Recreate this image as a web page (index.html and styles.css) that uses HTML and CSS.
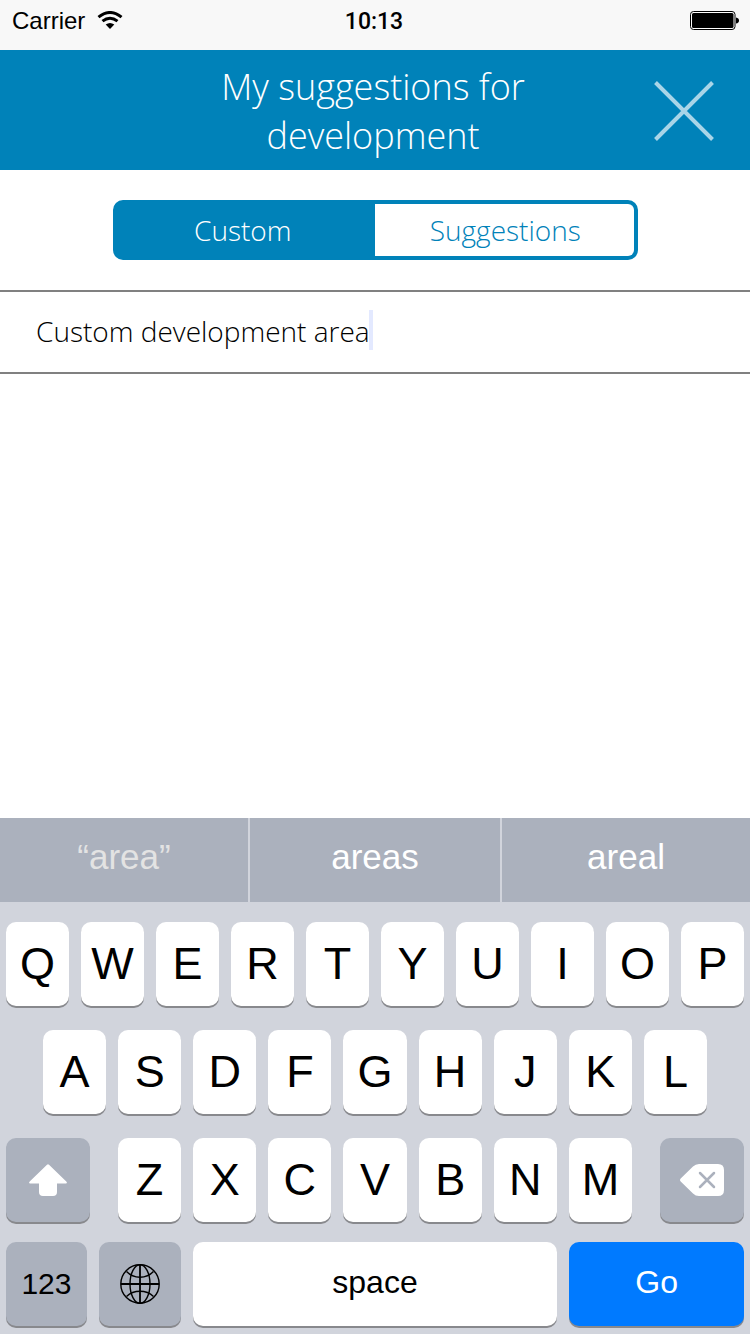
FILE: index.html
```html
<!DOCTYPE html>
<html lang="en">
<head>
<meta charset="utf-8">
<meta name="viewport" content="width=device-width, initial-scale=1">
<title>My suggestions for development</title>
<link rel="stylesheet" href="styles.css">
</head>
<body>
<div class="status">
  <div class="status-left">
    <span>Carrier</span>
    <svg class="wifi" viewBox="0 0 26 20" aria-hidden="true">
      <g fill="none" stroke="#000" stroke-width="3">
        <path d="M1.500 6.200Q13-3.200 24.500 6.200"/>
        <path d="M5.500 10.200Q13 4.200 20.500 10.200"/>
      </g>
      <path d="M8.700 13.600Q13 10.200 17.300 13.600L13 18z"/>
    </svg>
  </div>
  <time class="clock">10:13</time>
  <svg class="battery" viewBox="0 0 50 20" aria-hidden="true">
    <rect x="0.500" y="0.500" width="44.500" height="18" rx="3" fill="#fff" stroke="#000"/>
    <rect x="2" y="2" width="41.500" height="15" rx="1.500"/>
    <path d="M46 6.500q3 .5 3 3t-3 3z"/>
  </svg>
</div>

<header class="header">
  <h1 class="title">My suggestions for development</h1>
  <button class="close" type="button" aria-label="Close">
    <svg class="close-icon" viewBox="0 0 60 60" aria-hidden="true"><path d="M1.500 1.500L58.500 58.500M58.500 1.500L1.500 58.500" stroke="#a9d5e8" stroke-width="4"/></svg>
  </button>
</header>

<main class="content">
  <div class="segments" role="group" aria-label="Source">
    <button class="segment segment-active" type="button" aria-pressed="true">Custom</button>
    <button class="segment" type="button" aria-pressed="false">Suggestions</button>
  </div>
  <div class="field">
    <input class="field-input" type="text" value="Custom development area" aria-label="Development area">
    <span class="caret"></span>
  </div>
</main>

<section class="keyboard" aria-label="Keyboard">
  <div class="predictions">
    <button class="prediction prediction-typed" type="button">“area”</button>
    <button class="prediction" type="button">areas</button>
    <button class="prediction" type="button">areal</button>
  </div>
  <div class="keys">
    <div class="row">
      <button class="key" type="button">Q</button>
      <button class="key" type="button">W</button>
      <button class="key" type="button">E</button>
      <button class="key" type="button">R</button>
      <button class="key" type="button">T</button>
      <button class="key" type="button">Y</button>
      <button class="key" type="button">U</button>
      <button class="key" type="button">I</button>
      <button class="key" type="button">O</button>
      <button class="key" type="button">P</button>
    </div>
    <div class="row row-home">
      <button class="key" type="button">A</button>
      <button class="key" type="button">S</button>
      <button class="key" type="button">D</button>
      <button class="key" type="button">F</button>
      <button class="key" type="button">G</button>
      <button class="key" type="button">H</button>
      <button class="key" type="button">J</button>
      <button class="key" type="button">K</button>
      <button class="key" type="button">L</button>
    </div>
    <div class="row-shift">
      <button class="key key-dark" type="button" aria-label="Shift">
        <svg class="shift-icon" viewBox="0 0 38 32" aria-hidden="true"><path d="M18 .8q1-.9 2 0L37.300 17.500q1.500 2-.5 2H28V28q0 4-4 4H14q-4 0-4-4V19.500H1.200q-2 0-.5-2z" fill="#fff"/></svg>
      </button>
      <div class="row">
        <button class="key" type="button">Z</button>
        <button class="key" type="button">X</button>
        <button class="key" type="button">C</button>
        <button class="key" type="button">V</button>
        <button class="key" type="button">B</button>
        <button class="key" type="button">N</button>
        <button class="key" type="button">M</button>
      </div>
      <button class="key key-dark" type="button" aria-label="Delete">
        <svg class="delete-icon" viewBox="0 0 44 32" aria-hidden="true"><path d="M.7 14.500L13 2.500Q15.500 0 19 0H38q6 0 6 6V26q0 6-6 6H19q-3.500 0-6-2.500L.7 17.500q-1.400-1.500 0-3z" fill="#fff"/><path d="M20 9L34 23M34 9L20 23" stroke="#abb1bd" stroke-width="2.500" stroke-linecap="round"/></svg>
      </button>
    </div>
    <div class="row-bottom">
      <button class="key key-dark key-numbers" type="button">123</button>
      <button class="key key-dark" type="button" aria-label="Next keyboard">
        <svg class="globe-icon" viewBox="0 0 40 40" aria-hidden="true"><g fill="none" stroke="#000" stroke-width="1.400"><circle cx="20" cy="20" r="19.200"/><ellipse cx="20" cy="20" rx="10" ry="19.200"/><path d="M20 1V39M1 20H39" stroke-width="1.800"/><path d="M6.500 7.500Q12 13.200 20 13.200T33.500 7.500M6.500 32.500Q12 27.300 20 27.300T33.500 32.500"/></g></svg>
      </button>
      <button class="key key-word" type="button">space</button>
      <button class="key key-word key-go" type="button">Go</button>
    </div>
  </div>
</section>
</body>
</html>
```
FILE: styles.css
```css
* {
  box-sizing: border-box;
}

body {
  margin: 0;
  min-height: 100vh;
  display: flex;
  flex-direction: column;
  background: #fff;
  color: #000;
  font-family: "Liberation Sans", Arial, sans-serif;
}

button,
input {
  margin: 0;
  padding: 0;
  border: 0;
  background: none;
  color: inherit;
  font: inherit;
}

svg {
  display: block;
}

.status {
  display: grid;
  grid-template-columns: 1fr auto 1fr;
  align-items: center;
  padding: 6px 10px 14px 12px;
  background: #f8f8f8;
  font-size: 24px;
  line-height: 30px;
}

.status-left {
  display: flex;
  align-items: center;
  gap: 12px;
}

.wifi {
  width: 26px;
  height: 20px;
}

.clock {
  padding: 2px 4px 0 0;
  font-family: Roboto, "Liberation Sans", sans-serif;
  font-size: 23px;
  font-weight: 500;
  line-height: 28px;
}

.battery {
  width: 50px;
  height: 20px;
  justify-self: end;
}

.header {
  display: grid;
  grid-template-columns: 128px 1fr 132px;
  align-items: center;
  padding: 12px 0 10px;
  background: #0082b9;
  color: #fff;
}

.title {
  grid-column: 2;
  max-width: 360px;
  margin: 0 auto;
  font: 300 36px/49px "Open Sans", sans-serif;
  text-align: center;
}

.close {
  justify-self: center;
}

.close-icon {
  width: 60px;
  height: 60px;
}

.content {
  flex: 1;
  padding-top: 30px;
}

.segments {
  display: grid;
  grid-template-columns: 1fr 1fr;
  width: 70%;
  height: 60px;
  margin: 0 auto 30px;
  border: 4px solid #0082b9;
  border-radius: 10px;
  background: #0082b9;
  font: 300 28px/38px "Open Sans", sans-serif;
}

.segment {
  padding-left: 2px;
  border-radius: 0 6px 6px 0;
  background: #fff;
  color: #0082b9;
}

.segment-active {
  padding: 0 6px 0 0;
  background: #0082b9;
  color: #fff;
}

.field {
  display: flex;
  align-items: center;
  padding: 18px 36px 22px;
  border-top: 2px solid #808080;
  border-bottom: 2px solid #808080;
  font: 300 28px/38px "Open Sans", sans-serif;
}

.field-input {
  field-sizing: content;
  height: 40px;
  padding-top: 2px;
  outline: 0;
}

.caret {
  width: 4px;
  height: 40px;
  margin-left: -1px;
  background: #e3e9ff;
}

.keyboard {
  background: #d1d4dc;
}

.predictions {
  display: grid;
  grid-template-columns: 248fr 250fr 248fr;
  gap: 2px;
  height: 84px;
}

.prediction {
  padding-bottom: 6px;
  background: #abb1bd;
  color: #fff;
  font-size: 35px;
}

.prediction-typed {
  color: #e3e3e3;
}

.keys {
  display: grid;
  padding: 20px 6px 8px;
}

.row {
  display: grid;
  grid-auto-flow: column;
  grid-auto-columns: 1fr;
  gap: 12px;
  margin-bottom: 24px;
}

.row-home {
  padding: 0 37px;
}

.row-shift {
  display: grid;
  grid-template-columns: 84fr 514fr 84fr;
  gap: 28px;
  margin-bottom: 20px;
}

.row-shift .row {
  margin: 0;
}

.row-bottom {
  display: grid;
  grid-template-columns: 81fr 82fr 365fr 175fr;
  gap: 12px;
}

.key {
  display: flex;
  align-items: center;
  justify-content: center;
  min-width: 0;
  height: 84px;
  border-radius: 10px;
  background: #fff;
  box-shadow: 0 2px 0 #88898d;
  font-size: 45px;
}

.key-dark {
  background: #abb1bd;
}

.key-numbers {
  font-size: 30px;
}

.key-word {
  padding-bottom: 4px;
  font-size: 32px;
}

.key-go {
  background: #007aff;
  color: #fff;
}

.shift-icon {
  width: 38px;
  height: 32px;
}

.delete-icon {
  width: 44px;
  height: 32px;
}

.globe-icon {
  width: 40px;
  height: 40px;
}
```
